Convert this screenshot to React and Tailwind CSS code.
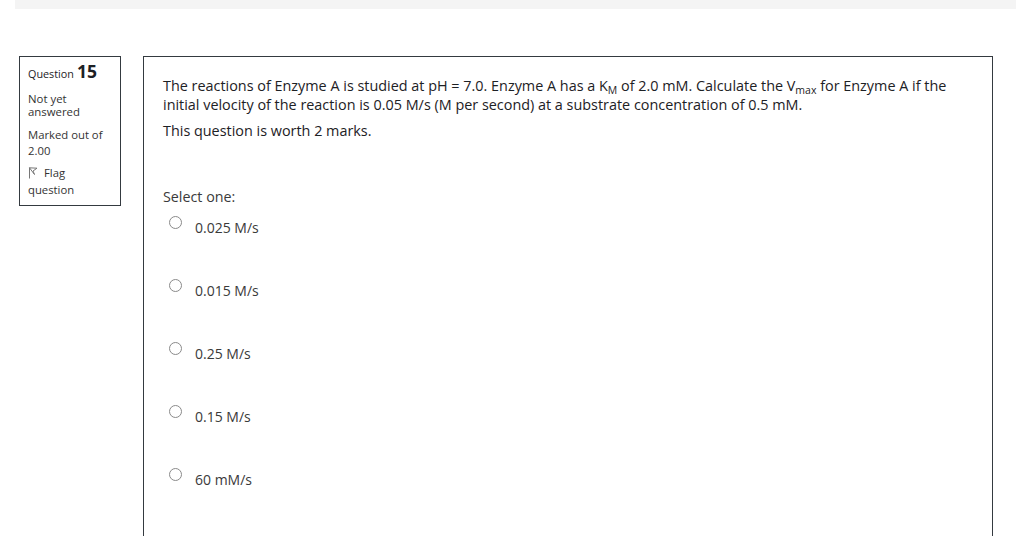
import React from 'react';

const options = ['0.025 M/s', '0.015 M/s', '0.25 M/s', '0.15 M/s', '60 mM/s'];

const FlagIcon = () => (
  <svg width="10" height="12" viewBox="0 0 10 12" fill="none" stroke="#777" strokeWidth="1">
    <path d="M1.5 0.5 V11.5" />
    <path d="M1.5 0.8 L9 1.2 L5 4 L6.5 7.5 Z" strokeLinejoin="round" />
  </svg>
);

const Option = ({ label }) => (
  <div className="flex items-start h-[63px]">
    <span className="mt-[4px] ml-[6px] w-[13px] h-[13px] rounded-full border border-[#8a8a8a] bg-white shrink-0" />
    <span className="ml-[13px] mt-[7px] text-[14px] leading-[18px] text-[#3a3a3a]">{label}</span>
  </div>
);

export default function App() {
  return (
    <div className="min-h-screen bg-white overflow-hidden" style={{ fontFamily: '"Open Sans", "Noto Sans", sans-serif' }}>
      {/* top bar */}
      <div className="ml-[15px] h-[9px] bg-[#f4f4f4]" />

      <div className="flex items-start pl-[19px] mt-[47px] gap-[22px]">
        {/* info */}
        <div className="w-[102px] h-[150px] border border-[#343a40] px-[8px] pt-[3px] text-[#333]">
          <div className="flex items-baseline gap-[3px] text-[#1d2125]">
            <span className="text-[10.8px]">Question</span>
            <span className="text-[17.5px] font-bold leading-[22px]">15</span>
          </div>
          <div className="mt-[10px] text-[11.4px] leading-[13px]">Not yet<br />answered</div>
          <div className="mt-[9px] text-[11.3px] leading-[16px]">Marked out of<br />2.00</div>
          <div className="mt-[6px] text-[11.3px] leading-[15px]">
            <span className="inline-flex items-center gap-[6px]">
              <FlagIcon />
              <span>Flag</span>
            </span>
            <br />question
          </div>
        </div>

        {/* question */}
        <div className="w-[850px] h-[600px] border border-[#343a40] pl-[19px] pt-[19px]">
          <div className="text-[14.4px] leading-[19px] text-[#1d2125]">
            The reactions of Enzyme A is studied at pH = 7.0. Enzyme A has a K<sub className="text-[10.5px]">M</sub> of 2.0 mM. Calculate the V<sub className="text-[10.5px]">max</sub> for Enzyme A if the
            <br />
            initial velocity of the reaction is 0.05 M/s (M per second) at a substrate concentration of 0.5 mM.
          </div>
          <div className="mt-[7px] text-[14.4px] leading-[19px] text-[#1d2125]">This question is worth 2 marks.</div>

          <div className="mt-[48px] text-[14.3px] leading-[18px] text-[#3a3a3a]">Select one:</div>
          <div className="mt-[6px]">
            {options.map((o) => (
              <Option key={o} label={o} />
            ))}
          </div>
        </div>
      </div>
    </div>
  );
}
